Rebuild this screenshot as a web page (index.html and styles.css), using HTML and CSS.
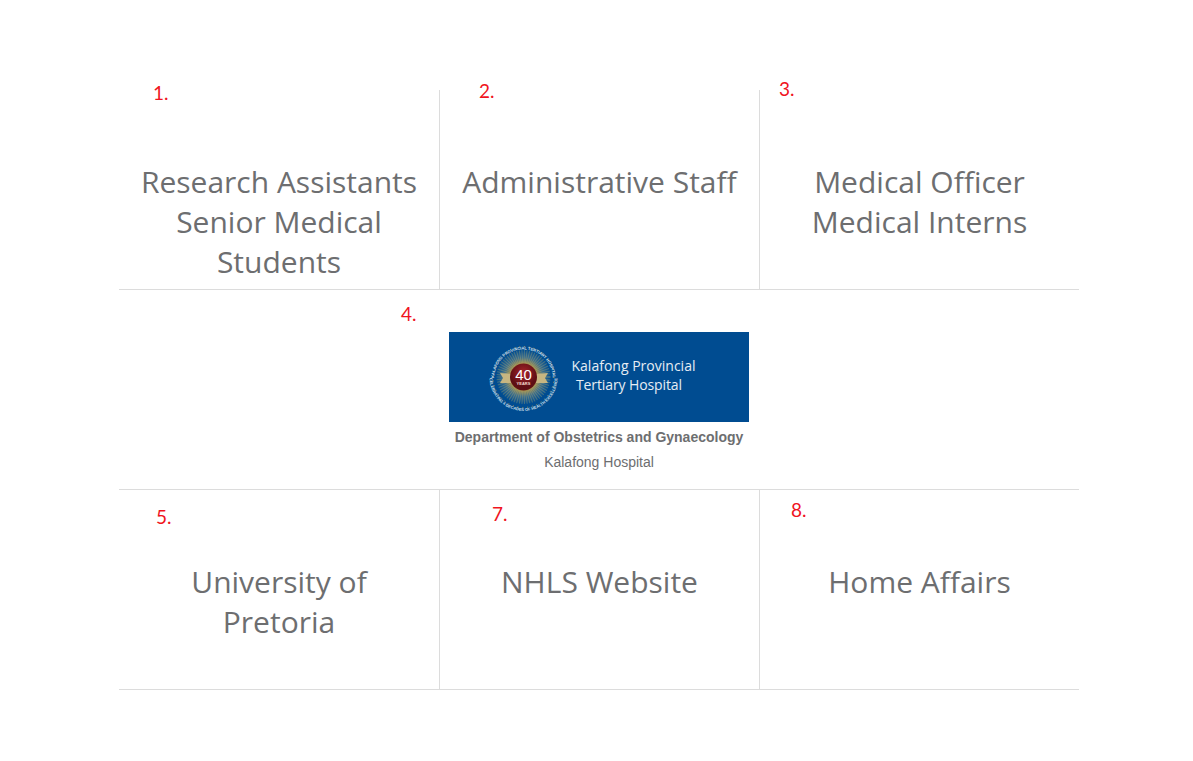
FILE: index.html
```html
<!DOCTYPE html>
<html lang="en">
<head>
    <meta charset="UTF-8">
    <title>Kalafong Hospital</title>
    <link rel="stylesheet" href="styles.css">
</head>
<body>
    <div class="links">
        <div class="cell">
            <span class="mark mark-1">1.</span>
            <h3 class="cell-title">Research Assistants Senior Medical Students</h3>
        </div>
        <div class="cell">
            <span class="mark mark-2">2.</span>
            <h3 class="cell-title">Administrative Staff</h3>
        </div>
        <div class="cell">
            <span class="mark mark-3">3.</span>
            <h3 class="cell-title">Medical Officer Medical Interns</h3>
        </div>
        <div class="cell-wide">
            <span class="mark mark-4">4.</span>
            <svg class="logo" viewBox="0 0 300 90" width="300" height="90" role="img" aria-label="Kalafong Provincial Tertiary Hospital">
                <defs>
                    <radialGradient id="glow">
                        <stop offset="0.45" stop-color="#b99a45"/>
                        <stop offset="0.72" stop-color="#3f6f8c"/>
                        <stop offset="1" stop-color="#004c91"/>
                    </radialGradient>
                    <radialGradient id="ball" cx="0.5" cy="0.35">
                        <stop offset="0" stop-color="#a8242a"/>
                        <stop offset="1" stop-color="#5e0f14"/>
                    </radialGradient>
                    <path id="arcTop" d="M45 47 A29.500 29.500 0 0 1 104 47"/>
                    <path id="arcBottom" d="M40.500 45 A34 34 0 0 0 108.500 45"/>
                </defs>
                <rect width="300" height="90" fill="#004c91"/>
                <circle cx="74.500" cy="45" r="27" fill="url(#glow)"/>
                <circle class="logo-rays" cx="74.500" cy="45" r="20"/>
                <circle class="logo-ring-line" cx="74.500" cy="45" r="30.500"/>
                <text class="logo-ring"><textPath href="#arcTop" startOffset="50%" text-anchor="middle">KALAFONG PROVINCIAL TERTIARY HOSPITAL</textPath></text>
                <text class="logo-ring"><textPath href="#arcBottom" startOffset="50%" text-anchor="middle">CELEBRATING 4 DECADES OF HEALTH EXCELLENCE</textPath></text>
                <path d="M51 41 L64 42 L64 51 L51 51 L54 46 Z M99 41 L85 42 L85 51 L99 51 L96 46 Z" fill="#c7b681"/>
                <circle cx="74.500" cy="45" r="13.500" fill="url(#ball)"/>
                <text class="logo-forty" x="74.500" y="48" text-anchor="middle">40</text>
                <text class="logo-years" x="74.500" y="53" text-anchor="middle">YEARS</text>
                <text class="logo-name" x="122.500" y="39" textLength="124">Kalafong Provincial</text>
                <text class="logo-name" x="127" y="58" textLength="106">Tertiary Hospital</text>
            </svg>
            <div class="dept">Department of Obstetrics and Gynaecology</div>
            <div class="place">Kalafong Hospital</div>
        </div>
        <div class="cell">
            <span class="mark mark-5">5.</span>
            <h3 class="cell-title">University of Pretoria</h3>
        </div>
        <div class="cell">
            <span class="mark mark-7">7.</span>
            <h3 class="cell-title">NHLS Website</h3>
        </div>
        <div class="cell">
            <span class="mark mark-8">8.</span>
            <h3 class="cell-title">Home Affairs</h3>
        </div>
    </div>
</body>
</html>
```

FILE: styles.css
```css
body {
    margin: 0;
    padding-top: 90px;
    background: #fff;
    color: #6d6e70;
    font-family: "Open Sans", sans-serif;
}
.links {
    display: grid;
    grid-template-columns: repeat(3, 320px);
    grid-auto-rows: 200px;
    width: 960px;
    margin-left: 119px;
}
.cell {
    position: relative;
    box-sizing: border-box;
    padding: 72px 20px 0;
    border-bottom: 1px solid #dcdcdc;
    text-align: center;
}
.cell + .cell {
    border-left: 1px solid #dcdcdc;
}
.cell-title {
    margin: 0;
    font-size: 30px;
    font-weight: 400;
    line-height: 40px;
}
.cell-wide {
    position: relative;
    grid-column: 1 / 4;
    box-sizing: border-box;
    padding-top: 42px;
    border-bottom: 1px solid #dcdcdc;
    text-align: center;
}
.logo {
    display: block;
    margin: 0 auto 3px;
}
.logo-rays {
    fill: none;
    stroke: #f0d060;
    stroke-width: 14;
    stroke-dasharray: 0.8 1.2;
    opacity: 0.25;
}
.logo-ring-line {
    fill: none;
    stroke: #c9a64a;
    stroke-width: 1;
    stroke-dasharray: 1 3.800;
    opacity: 0.8;
}
.logo-ring {
    font-family: "Liberation Sans", sans-serif;
    font-size: 4px;
    font-weight: 700;
    fill: #d5e0ec;
}
.logo-forty {
    font-family: "Liberation Sans", sans-serif;
    font-size: 15px;
    fill: #fff;
}
.logo-years {
    font-family: "Liberation Sans", sans-serif;
    font-size: 4px;
    font-weight: 700;
    fill: #f3dcd0;
}
.logo-name {
    font-family: "Open Sans", sans-serif;
    font-size: 14px;
    fill: #e6edf4;
}
.dept {
    font-family: "Liberation Sans", sans-serif;
    font-size: 14px;
    font-weight: 700;
    line-height: 25px;
}
.place {
    font-family: "Liberation Sans", sans-serif;
    font-size: 14px;
    line-height: 25px;
}
/* red numbers written over the page */
.mark {
    position: absolute;
    font-family: Lato, sans-serif;
    font-size: 19px;
    line-height: 20px;
    color: #f0141e;
}
.mark-1 { left: 34px; top: -7px; }
.mark-2 { left: 39px; top: -9px; }
.mark-3 { left: 19px; top: -11px; }
.mark-4 { left: 282px; top: 14px; }
.mark-5 { left: 37px; top: 17px; }
.mark-7 { left: 52px; top: 14px; }
.mark-8 { left: 31px; top: 10px; }
```
